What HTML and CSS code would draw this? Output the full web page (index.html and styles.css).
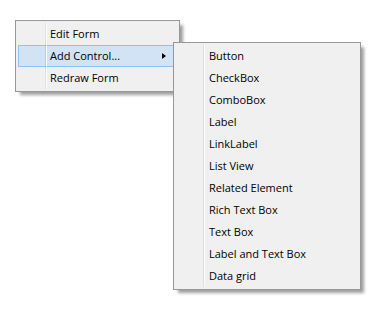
FILE: index.html
```html
<!DOCTYPE html>
<html lang="en">
<head>
  <meta charset="UTF-8">
  <title>Form Context Menu</title>
  <link rel="stylesheet" href="styles.css">
</head>
<body>

  <!-- Main context menu -->
  <ul class="menu menu-main">
    <li class="item">Edit Form</li>
    <li class="item hot has-sub">Add Control...<span class="arrow"></span></li>
    <li class="item">Redraw Form</li>
  </ul>

  <!-- Add Control submenu -->
  <ul class="menu menu-sub">
    <li class="item">Button</li>
    <li class="item">CheckBox</li>
    <li class="item">ComboBox</li>
    <li class="item">Label</li>
    <li class="item">LinkLabel</li>
    <li class="item">List View</li>
    <li class="item">Related Element</li>
    <li class="item">Rich Text Box</li>
    <li class="item">Text Box</li>
    <li class="item">Label and Text Box</li>
    <li class="item">Data grid</li>
  </ul>

</body>
</html>
```

FILE: styles.css
```css
/* Page */
html, body {
  margin: 0;
  padding: 0;
  height: 100%;
  background: #ffffff;
  font-family: 'Open Sans', 'Liberation Sans', sans-serif;
  font-size: 11px;
  color: #000;
}

/* Popup menus */
.menu {
  position: absolute;
  box-sizing: border-box;
  margin: 0;
  padding: 2px;
  list-style: none;
  background: #f0f0f0;
  border: 1px solid #979797;
  box-shadow: 4px 4px 3px -1px rgba(0, 0, 0, 0.38);
}
.menu::before {
  content: "";
  position: absolute;
  left: 29px;
  top: 2px;
  bottom: 2px;
  width: 1px;
  background: rgba(0, 0, 0, 0.08);
  border-right: 1px solid rgba(255, 255, 255, 0.9);
  z-index: 1;
}
.menu-main {
  left: 15px;
  top: 20px;
  width: 165px;
}
.menu-sub {
  left: 173px;
  top: 42px;
  width: 188px;
}

/* Items */
.item {
  box-sizing: border-box;
  display: flex;
  align-items: center;
  justify-content: space-between;
  height: 22px;
  padding: 0 10px 2px 31px;
  border: 1px solid transparent;
  white-space: nowrap;
}
.menu-sub .item {
  padding-left: 32px;
}
.item.hot {
  background: #d1e3f4;
  border-color: #8fc2ef;
}
.arrow {
  width: 0;
  height: 0;
  margin-top: 2px;
  border-left: 4px solid #000;
  border-top: 3.5px solid transparent;
  border-bottom: 3.5px solid transparent;
}
```
